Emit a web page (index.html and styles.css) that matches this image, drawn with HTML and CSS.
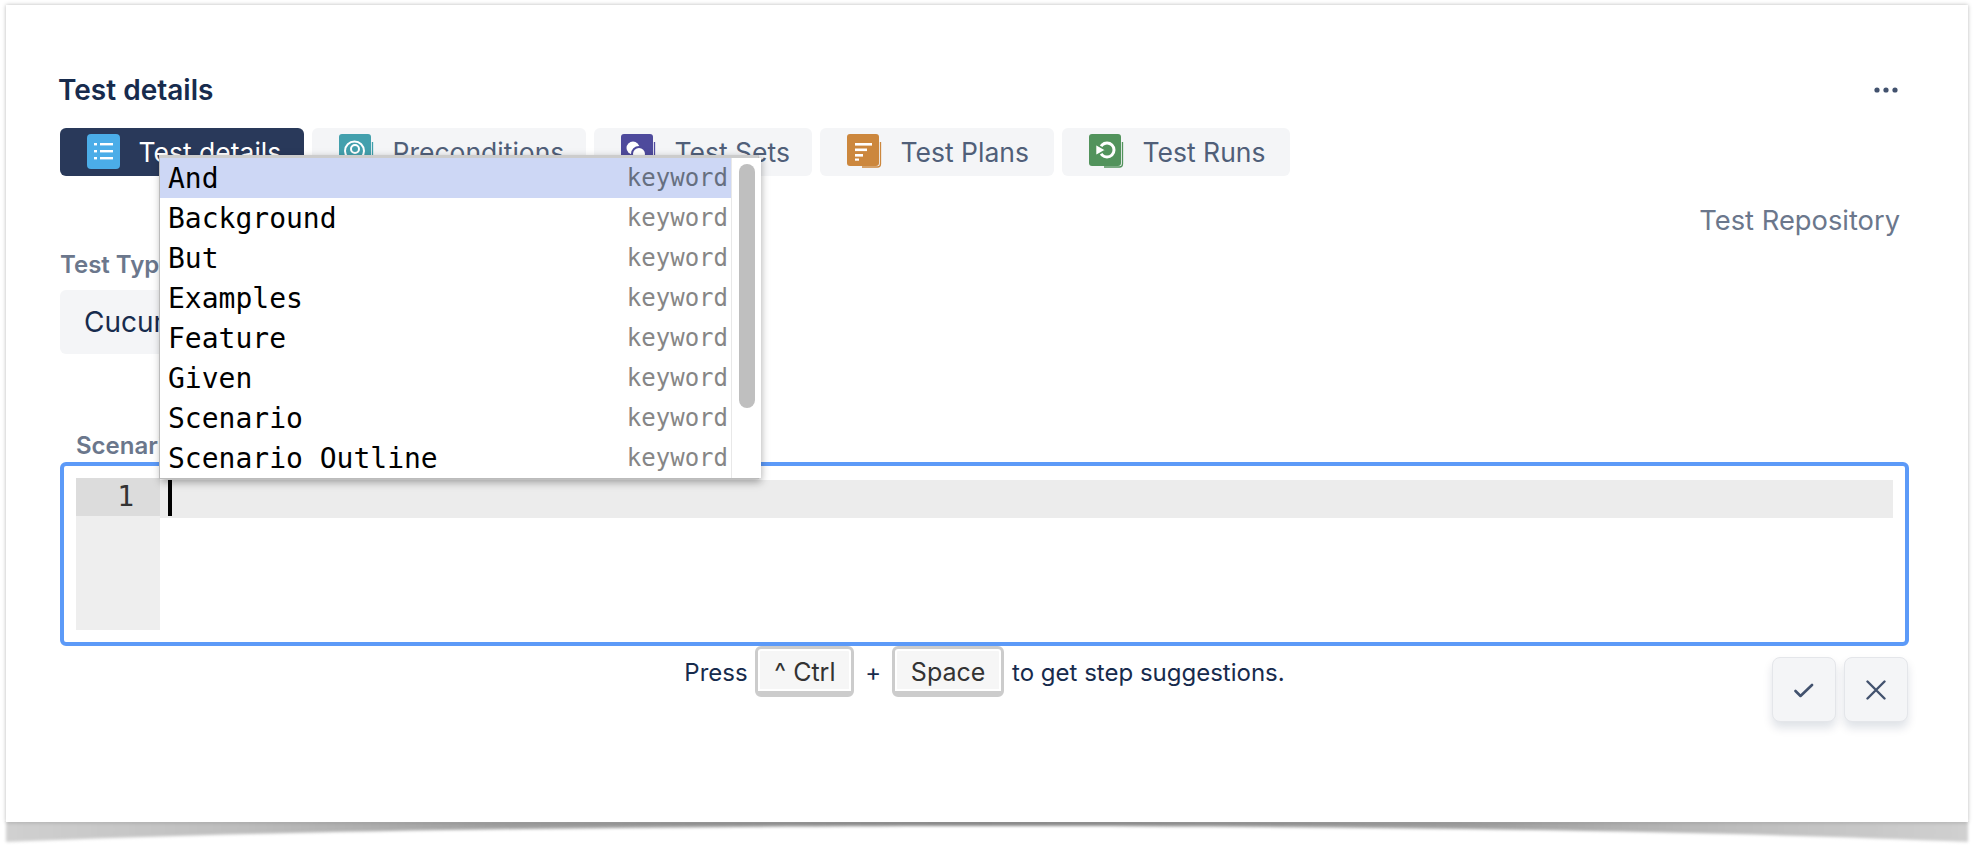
FILE: index.html
```html
<!DOCTYPE html>
<html lang="en">
<head>
<meta charset="utf-8">
<title>Test details</title>
<link rel="stylesheet" href="styles.css">
</head>
<body>
<main class="card">
  <header class="head">
    <h1 class="title">Test details</h1>
    <svg class="dots" width="24" height="6" viewBox="0 0 24 6"><circle cx="3" cy="3" r="2.6"/><circle cx="12" cy="3" r="2.6"/><circle cx="21" cy="3" r="2.6"/></svg>
  </header>
  <nav class="tabs">
    <div class="tab tab-active tab-w1">
      <svg class="ico" width="34" height="36" viewBox="0 0 34 36"><rect width="33" height="35" rx="4" fill="#4bade8"/><g fill="#fff"><rect x="7" y="9" width="3" height="2.4"/><rect x="13" y="9" width="13" height="2.4"/><rect x="7" y="16" width="3" height="2.4"/><rect x="13" y="16" width="13" height="2.4"/><rect x="7" y="23" width="3" height="2.4"/><rect x="13" y="23" width="13" height="2.4"/></g></svg>
      <span>Test details</span>
    </div>
    <div class="tab tab-w2">
      <svg class="ico" width="36" height="36" viewBox="0 0 36 36"><path d="M33.5 8v22a3 3 0 0 1-3 3H7" fill="none" stroke="#3f9fac" stroke-width="1.3"/><rect width="32" height="32" rx="3" fill="#43a0ad"/><circle cx="15.5" cy="17" r="9.5" fill="none" stroke="#fff" stroke-width="2"/><circle cx="16" cy="15" r="4" fill="none" stroke="#fff" stroke-width="2"/></svg>
      <span>Preconditions</span>
    </div>
    <div class="tab tab-w3">
      <svg class="ico" width="36" height="36" viewBox="0 0 36 36"><path d="M33.5 8v22a3 3 0 0 1-3 3H7" fill="none" stroke="#4f4a9f" stroke-width="1.3"/><rect width="32" height="32" rx="3" fill="#4e4a9c"/><circle cx="12" cy="14" r="6.5" fill="#fff"/><circle cx="18" cy="20" r="7" fill="#fff" stroke="#4e4a9c" stroke-width="2"/></svg>
      <span>Test Sets</span>
    </div>
    <div class="tab tab-w4">
      <svg class="ico" width="36" height="36" viewBox="0 0 36 36"><path d="M33.5 8v22a3 3 0 0 1-3 3H15" fill="none" stroke="#cc873d" stroke-width="1.3"/><rect width="32" height="32" rx="3" fill="#cc873d"/><g fill="#fff"><rect x="8" y="9" width="17" height="2.6"/><rect x="8" y="14.5" width="12" height="2.6"/><rect x="8" y="20" width="8" height="2.6"/><rect x="8" y="24.5" width="4" height="2.2"/></g></svg>
      <span>Test Plans</span>
    </div>
    <div class="tab tab-w5">
      <svg class="ico" width="36" height="36" viewBox="0 0 36 36"><path d="M33.5 8v22a3 3 0 0 1-3 3H15" fill="none" stroke="#52935c" stroke-width="1.3"/><rect width="32" height="32" rx="3" fill="#52935c"/><circle cx="18" cy="16" r="7" fill="none" stroke="#fff" stroke-width="3"/><path d="M6.5 10l10.5 6-10.5 6z" fill="#fff" stroke="#52935c" stroke-width="1.6"/></svg>
      <span>Test Runs</span>
    </div>
  </nav>
  <div class="repo-row"><span class="repo">Test Repository</span></div>
  <label class="field-label type-label">Test Type</label>
  <div class="select">Cucumber</div>
  <label class="field-label scenario-label">Scenario</label>
  <div class="editor">
    <div class="gutter"><div class="gutter-active">1</div></div>
    <div class="code"><div class="active-line"><span class="cursor"></span></div></div>
  </div>
  <div class="actions-row">
    <p class="hint">Press <kbd class="key key-ctrl">^ Ctrl</kbd> <span class="plus">+</span> <kbd class="key key-space">Space</kbd> to get step suggestions.</p>
    <div class="actions">
      <button class="act" aria-label="Confirm"><svg width="20" height="16" viewBox="0 0 20 16"><path d="M1.5 9l5 5L18 3" fill="none" stroke="#42526e" stroke-width="2.6" stroke-linecap="round" stroke-linejoin="round"/></svg></button>
      <button class="act" aria-label="Cancel"><svg width="20" height="20" viewBox="0 0 20 20"><path d="M1.5 1.5l17 17M18.5 1.5l-17 17" fill="none" stroke="#42526e" stroke-width="2.4" stroke-linecap="round"/></svg></button>
    </div>
  </div>
  <div class="popup">
    <ul class="list">
      <li class="item item-on"><span>And</span><span class="kw">keyword</span></li>
      <li class="item"><span>Background</span><span class="kw">keyword</span></li>
      <li class="item"><span>But</span><span class="kw">keyword</span></li>
      <li class="item"><span>Examples</span><span class="kw">keyword</span></li>
      <li class="item"><span>Feature</span><span class="kw">keyword</span></li>
      <li class="item"><span>Given</span><span class="kw">keyword</span></li>
      <li class="item"><span>Scenario</span><span class="kw">keyword</span></li>
      <li class="item"><span>Scenario Outline</span><span class="kw">keyword</span></li>
    </ul>
    <div class="track"><div class="thumb"></div></div>
  </div>
</main>
<svg class="curl" width="1982" height="30" viewBox="0 0 1982 30">
  <defs>
    <linearGradient id="g" x1="0" x2="1" y1="0" y2="0">
      <stop offset="0" stop-color="#d0d0d0"/>
      <stop offset="0.12" stop-color="#bdbdbd"/>
      <stop offset="0.25" stop-color="#a0a0a0"/>
      <stop offset="0.5" stop-color="#8c8c8c"/>
      <stop offset="0.75" stop-color="#a0a0a0"/>
      <stop offset="0.88" stop-color="#bdbdbd"/>
      <stop offset="1" stop-color="#d0d0d0"/>
    </linearGradient>
    <filter id="b" x="-1%" y="-30%" width="102%" height="160%"><feGaussianBlur stdDeviation="1.4"/></filter>
  </defs>
  <path d="M6 0H1968V21C1700 9 1300 5 991 5C680 5 280 9 6 21Z" fill="url(#g)" filter="url(#b)"/>
</svg>
</body>
</html>
```
FILE: styles.css
```css
* { box-sizing: border-box; }
html, body { margin: 0; padding: 0; background: #fff; }
body { height: 851px; overflow: hidden; padding: 5px 14px 0 6px; font-family: Inter, "Liberation Sans", sans-serif; color: #172b4d; position: relative; }
.card { position: relative; z-index: 1; width: 1962px; height: 817px; background: #fff; padding: 62px 59px 0 54px; box-shadow: 0 0 4px rgba(0,0,0,.28); }
.head { display: flex; justify-content: space-between; align-items: center; height: 46px; margin: 0 0 15px -2px; padding-right: 11px; }
.title { margin: 0; font-size: 28px; font-weight: 600; color: #172b4d; line-height: 32px; }
.dots { fill: #42526e; }
.tabs { display: flex; gap: 8px; height: 48px; }
.tab { height: 48px; border-radius: 6px; background: #f4f5f7; display: flex; align-items: flex-start; padding: 6px 0 0 27px; gap: 17.5px; color: #505f79; font-size: 26.5px; line-height: 37px; }
.tab span { display: block; white-space: nowrap; }
.tab-active { background: #29395a; color: #fff; }
.tab-w1 { width: 244px; }
.tab-w2 { width: 274px; }
.tab-w3 { width: 218px; }
.tab-w4 { width: 234px; }
.tab-w5 { width: 228px; }
.ico { flex: none; }
.repo-row { display: flex; justify-content: flex-end; height: 64px; padding: 27px 9px 0 0; }
.repo { font-size: 27.3px; line-height: 36px; color: #6b778c; }
.field-label { display: block; color: #6b778c; font-size: 24px; font-weight: 600; line-height: 28px; }
.type-label { margin-top: 11px; }
.select { width: 400px; height: 64px; margin-top: 11px; background: #f4f5f7; border-radius: 6px; padding-left: 24px; font-size: 28px; line-height: 65px; }
.scenario-label { margin-top: 78px; padding-left: 16px; }
.editor { position: relative; height: 184px; margin-top: 2px; border: 4px solid #5c9af8; border-radius: 6px; padding: 12px; display: flex; width: 1849px; background: #fff; }
.gutter { width: 84px; height: 152px; background: #eee; flex: none; }
.gutter-active { height: 38px; background: #dcdcdc; font-family: "DejaVu Sans Mono", monospace; font-size: 28px; line-height: 38px; color: #333; text-align: right; padding-right: 26px; }
.code { flex: 1; }
.active-line { height: 38px; background: #ececec; padding-left: 8px; }
.cursor { display: block; width: 4px; height: 36px; margin-top: 2px; background: #000; }
.actions-row { position: relative; display: flex; justify-content: center; width: 1849px; }
.hint { margin: 0; font-size: 24px; line-height: 53px; color: #172b4d; white-space: nowrap; }
.key { display: inline-block; height: 51px; margin: 0 1px; padding: 0 16px; border: 3px solid #ccc; border-bottom-width: 6px; border-radius: 6px; background: #f6f6f6; font-family: Inter, "Liberation Sans", sans-serif; font-size: 25px; line-height: 46px; color: #333; vertical-align: top; box-shadow: inset 0 0 0 2px #fff; }
.plus { margin: 0 3px; }
.actions { position: absolute; right: 1px; top: 11px; display: flex; gap: 8px; }
.act { width: 64px; height: 65px; padding: 0; border: 1px solid #e4e6ea; border-radius: 8px; background: #f4f5f7; display: flex; align-items: center; justify-content: center; box-shadow: 0 6px 10px rgba(9,30,66,.13); }
.popup { position: absolute; left: 153px; top: 150px; width: 600px; height: 324px; background: #fff; border: 1px solid #bbb; border-top: 3px solid #ccc; display: flex; box-shadow: 2px 3px 8px rgba(0,0,0,.35); }
.list { list-style: none; margin: 0; padding: 0; width: 571px; flex: none; font-family: "DejaVu Sans Mono", monospace; font-size: 28px; color: #000; }
.item { height: 40px; display: flex; justify-content: space-between; align-items: center; padding: 1px 3px 0 8px; line-height: 39px; }
.item-on { background: #cdd7f5; }
.kw { font-size: 24px; color: #868686; }
.item-on .kw { color: #666f80; }
.track { flex: 1; border-left: 1px solid #e8e8e8; padding: 6px 6px 0 7px; background: #fff; }
.thumb { width: 16px; height: 244px; border-radius: 8px; background: #bfbfbf; }
.curl { position: absolute; left: 0; top: 821px; z-index: 0; }
```
